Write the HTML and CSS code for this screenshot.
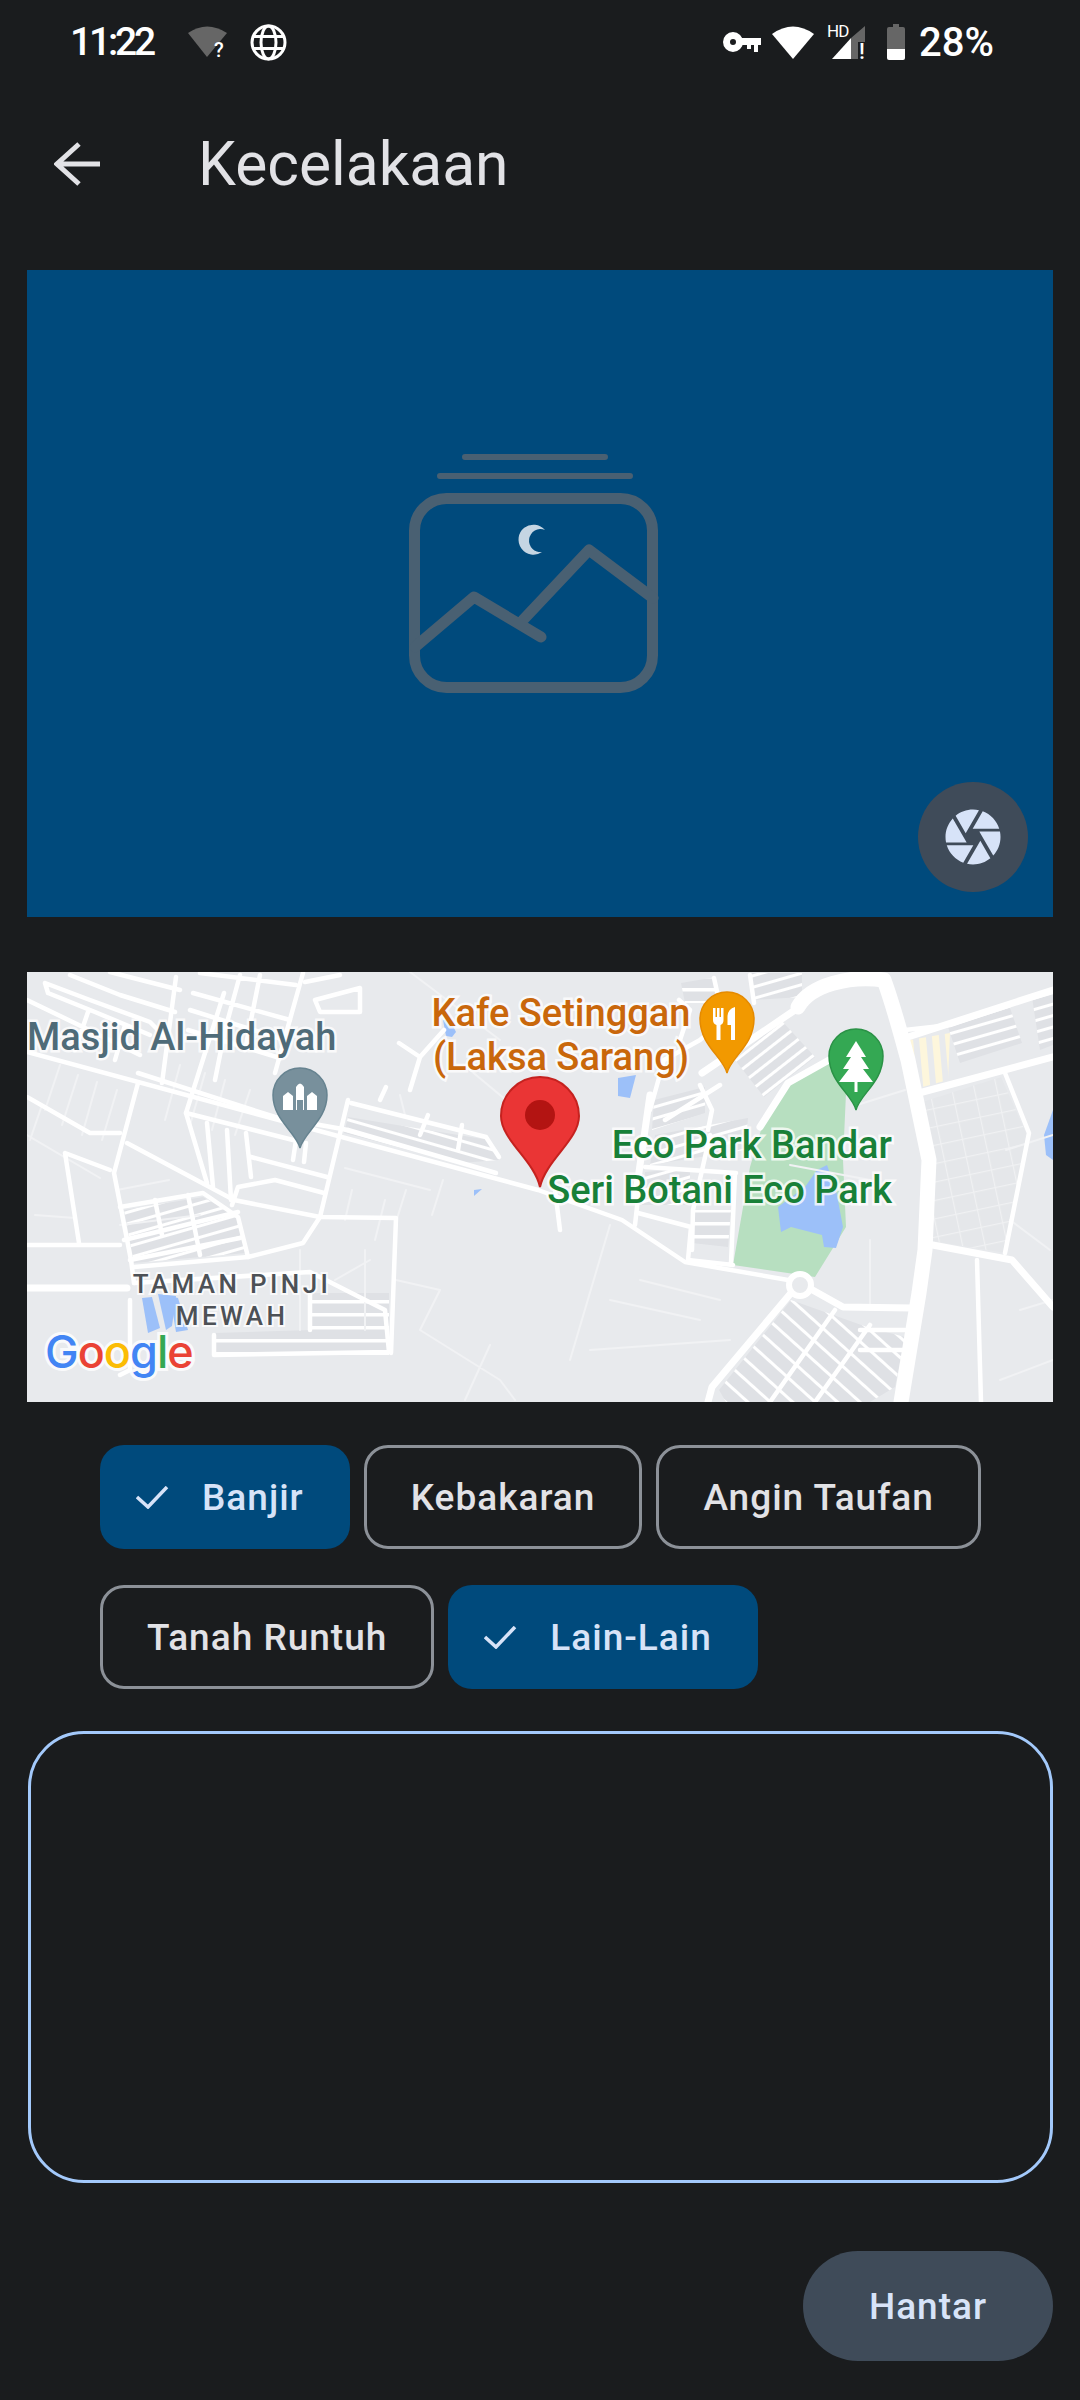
FILE: index.html
```html
<!DOCTYPE html>
<html lang="ms">
<head>
  <meta charset="UTF-8">
  <title>Kecelakaan</title>
  <link rel="stylesheet" href="styles.css">
</head>
<body>

<div class="status-bar">
  <span class="status-text status-time">11:22</span>
  <svg class="icon-wifi-off" viewBox="0 -4 40 40">
    <path class="grey-fill" d="M0 7 Q19 -6 39 7 L19 31 Z"/>
    <text class="tiny-q" x="26" y="31">?</text>
  </svg>
  <svg class="icon-globe" viewBox="0 0 37 37">
    <circle class="line-w" cx="18.5" cy="18.5" r="16.5"/>
    <ellipse class="line-w" cx="18.5" cy="18.5" rx="7.5" ry="16.5"/>
    <path class="line-w" d="M3 12.5 H34 M3 24.5 H34"/>
  </svg>
  <span class="status-spacer"></span>
  <svg class="icon-key" viewBox="0 0 38 21">
    <circle class="key-ring" cx="10" cy="10" r="6.5"/>
    <path class="white-fill" d="M16 6 H38 V13 H35 V20 H31 V13 H28 V17 H24 V13 H16 Z"/>
  </svg>
  <svg class="icon-wifi" viewBox="0 0 42 33">
    <path class="white-fill" d="M0 8 Q21 -7 42 8 L21 33 Z"/>
  </svg>
  <svg class="icon-signal" viewBox="0 -6 40 48">
    <path class="grey-fill" d="M24 14 L38 2 V18 H31 V35 H24 Z"/>
    <path class="white-fill" d="M5 35 L24 14 V35 Z"/>
    <text class="tiny-hd" x="0" y="13">HD</text>
    <text class="tiny-bang" x="32" y="35">!</text>
  </svg>
  <svg class="icon-battery" viewBox="0 0 18 36">
    <path class="grey-fill" d="M6 0 H12 V3 H16 Q18 3 18 5 V25 H0 V5 Q0 3 2 3 H6 Z"/>
    <path class="white-fill" d="M0 25 H18 V34 Q18 36 16 36 H2 Q0 36 0 34 Z"/>
  </svg>
  <span class="status-text status-battery">28%</span>
</div>

<div class="top-bar">
  <svg class="back-arrow" viewBox="0 0 46 44">
    <path d="M25 2 L3 22 L25 42 M3 22 H46"/>
  </svg>
  <h1 class="page-title">Kecelakaan</h1>
</div>

<div class="photo-box">
  <svg class="photo-art" viewBox="27 270 1026 647">
    <path class="art-thin" d="M465 457 H605 M440 476 H630"/>
    <rect class="art-line" x="414.5" y="498.5" width="238" height="189" rx="32"/>
    <path class="art-line" d="M415 647 L474 597 L541 637 M523 620 L589 550 L653 598"/>
    <path class="art-moon" d="M545 530 A15 15 0 1 0 542 552 A11.5 11.5 0 1 1 545 530 Z"/>
  </svg>
  <div class="shutter-btn">
    <svg class="shutter-icon" viewBox="0 0 24 24">
      <path d="M9.4 10.5l4.77-8.26C13.47 2.09 12.75 2 12 2c-2.4 0-4.6.85-6.32 2.25l3.66 6.35.06-.1zM21.54 9c-.92-2.92-3.15-5.26-6-6.34L11.88 9h9.66zm.26 1h-7.49l.29.5 4.76 8.25C21 16.97 22 14.61 22 12c0-.69-.07-1.35-.2-2zM8.54 12l-3.9-6.75C3.01 7.03 2 9.39 2 12c0 .69.07 1.35.2 2h7.49l-1.15-2zm-6.08 3c.92 2.92 3.15 5.26 6 6.34L12.12 15H2.46zm11.27 0l-3.9 6.76c.7.15 1.42.24 2.17.24 2.4 0 4.6-.85 6.32-2.25l-3.66-6.35-.93 1.6z"/>
    </svg>
  </div>
</div>

<div class="map-box">
  <svg class="map-art" viewBox="27 972 1026 430">
    <defs>
      <pattern id="stripA" width="11" height="11" patternUnits="userSpaceOnUse" patternTransform="rotate(-16)">
        <rect width="11" height="11" fill="#dfe1e5"/><rect width="11" height="3" fill="#fff"/>
      </pattern>
      <pattern id="stripB" width="11" height="11" patternUnits="userSpaceOnUse" patternTransform="rotate(16)">
        <rect width="11" height="11" fill="#dfe1e5"/><rect width="11" height="3" fill="#fff"/>
      </pattern>
      <pattern id="stripC" width="11" height="11" patternUnits="userSpaceOnUse" patternTransform="rotate(52)">
        <rect width="11" height="11" fill="#dfe1e5"/><rect width="3" height="11" fill="#fff"/>
      </pattern>
      <pattern id="stripD" width="15" height="15" patternUnits="userSpaceOnUse" patternTransform="rotate(42)">
        <rect width="15" height="15" fill="#dfe1e5"/><rect width="15" height="3" fill="#fff"/>
      </pattern>
      <pattern id="stripE" width="13" height="13" patternUnits="userSpaceOnUse">
        <rect width="13" height="13" fill="#dfe1e5"/><rect width="13" height="3.5" fill="#fff"/>
      </pattern>
      <pattern id="stripF" width="13" height="13" patternUnits="userSpaceOnUse" patternTransform="rotate(-5)">
        <rect width="13" height="13" fill="#fdf6dc"/><rect width="6" height="13" fill="#e8eaed"/>
      </pattern>
      <pattern id="stripG" width="22" height="18" patternUnits="userSpaceOnUse" patternTransform="rotate(-12)">
        <rect width="22" height="18" fill="#e5e7ea"/><rect width="22" height="1.2" fill="#f0f1f3"/><rect width="1.2" height="18" fill="#f0f1f3"/>
      </pattern>
    </defs>

    <rect x="27" y="972" width="1026" height="430" fill="#e8eaed"/>

    <!-- blocks of houses -->
    <polygon fill="url(#stripB)" points="348,1117 489,1140 499,1160 461,1163 344,1133"/>
    <polygon fill="url(#stripA)" points="124,1210 203,1197 238,1217 246,1253 134,1263"/>
    <polygon fill="url(#stripE)" points="310,1293 389,1293 389,1355 214,1355 214,1333 310,1330"/>
    <polygon fill="url(#stripC)" points="781,1020 815,1057 764,1097 735,1060"/>
    <polygon fill="url(#stripA)" points="654,1100 705,1087 705,1113 652,1130"/>
    <polygon fill="url(#stripE)" points="681,983 716,977 716,1003 685,1003"/>
    <polygon fill="url(#stripA)" points="750,973 802,973 802,997 753,1000"/>
    <polygon fill="url(#stripA)" points="948,1027 1010,1008 1022,1043 960,1063"/>
    <polygon fill="url(#stripA)" points="1032,997 1053,990 1053,1045 1040,1050"/>
    <polygon fill="url(#stripF)" points="910,1040 950,1033 948,1080 919,1088"/>
    <polygon fill="url(#stripG)" points="919,1103 1001,1077 1026,1133 1022,1173 1005,1253 926,1240 933,1167"/>
    <polygon fill="url(#stripD)" points="791,1300 867,1327 905,1337 895,1387 870,1402 726,1402 719,1390"/>
    <polygon fill="url(#stripE)" points="693,1210 731,1210 728,1247 692,1243"/>
    <polygon fill="url(#stripA)" points="645,1172 690,1168 690,1205 642,1205"/>
    <polygon fill="url(#stripA)" points="655,1135 748,1118 745,1150 650,1165"/>

    <!-- park and water -->
    <polygon fill="#b7dfc0" points="829,1063 846,1093 843,1160 846,1227 815,1277 733,1265 750,1167 764,1120 788,1083"/>
    <polygon fill="#9cc0f9" points="778,1207 805,1187 817,1170 827,1165 836,1190 843,1227 836,1248 824,1247 822,1235 791,1227 781,1232"/>
    <polygon fill="#9cc0f9" points="618,1078 636,1075 630,1098 618,1096"/>
    <polygon fill="#9cc0f9" points="443,1020 450,1020 456,1032 452,1037 446,1036"/>
    <polygon fill="#9cc0f9" points="170,1296 178,1298 188,1330 176,1332"/>
    <polygon fill="#9cc0f9" points="142,1298 152,1297 160,1328 148,1333"/>
    <polygon fill="#9cc0f9" points="158,1294 176,1296 172,1326 166,1330"/>
    <polygon fill="#9cc0f9" points="1053,1110 1053,1160 1046,1155 1044,1135"/>
    <polygon fill="#9cc0f9" points="474,1190 482,1189 474,1196"/>

    <!-- thin lanes -->
    <path class="road-faint" d="M42 1105 L30 1140 M60 1065 L45 1110 M78 1075 L62 1125 M97 1082 L82 1135 M117 1090 L102 1140 M27 1135 L100 1178 M35 1215 L75 1218 M180 1065 L165 1120 M205 1073 L190 1125 M225 1080 L212 1130 M250 1090 L235 1135 M400 1095 L405 1115 M443 1180 L432 1215 M385 1200 L375 1240 M352 1190 L345 1220 M406 1190 L395 1225 M396 1280 L440 1290 L420 1330 L500 1380 L515 1400 M490 1345 L465 1400 M335 1280 L370 1260 M1006 1150 L1053 1135 M1010 1220 L1050 1250 M790 1165 L870 1180 M610 1225 L570 1360 M640 1280 L720 1300 M590 1350 L730 1340 M610 1300 L700 1320 M470 1070 L530 1120 M1020 1310 L1053 1300 M1000 1380 L1053 1360 M410 972 L500 1040 M300 1250 L300 1330 M365 1250 L365 1330 M857 1105 L905 1090 M870 1240 L870 1310 M117 1190 L169 1180 M120 1225 L200 1215 M345 1168 L430 1190"/>

    <!-- streets -->
    <path class="road" d="M27 1052 L538 1190 L622 1220 L685 1262 L788 1280"/>
    <path class="road" d="M45 983 L90 1000 L150 1022 L168 1040 M48 993 L95 1012 L150 1035 M27 1000 L85 1028 L140 1055 M70 975 L120 995 L175 1012 M110 972 L180 990 M88 1012 L75 1050 M125 1025 L115 1060 M45 983 L48 993"/>
    <path class="road" d="M193 993 L290 1020 M190 1010 L285 1040 M188 1030 L280 1058 M240 975 L225 1030 L215 1080 M260 975 L245 1050 M296 985 L200 973 M340 975 L305 982 M315 1000 L360 988 L360 1012 L320 1012 L315 1000"/>
    <path class="road" d="M138 1073 L275 1117 L348 1130 M186 1113 L293 1140 M296 1140 L293 1160 M306 1143 L304 1162"/>
    <path class="road" d="M27 1097 L90 1133 L120 1133 M127 1143 L234 1200 L320 1217 L396 1218 L391 1353 M138 1083 L114 1173 L131 1260 L134 1283 M27 1245 L120 1245 M65 1153 L79 1243 M65 1153 L110 1170"/>
    <path class="road" d="M348 1100 L320 1217 L303 1243 L248 1257 L134 1267 M176 977 L162 1083 M303 973 L275 1073 M224 993 L186 1113 L207 1183 M207 1123 L213 1187 M227 1130 L231 1200 M246 1133 L251 1177 M251 1157 L327 1177 M238 1187 L275 1180 L324 1193 M238 1187 L232 1205"/>
    <path class="road" d="M351 1103 L486 1137 L499 1157 M348 1130 L496 1173 M380 1100 L386 1087 M428 1115 L420 1135 M462 1125 L458 1150"/>
    <path class="road" d="M399 1043 L420 1057 L410 1090 M420 1057 L444 1030 M120 1207 L203 1193 L238 1217 L248 1257 M155 1200 L162 1235 M188 1195 L200 1255 M124 1240 L238 1212 M130 1260 L240 1238"/>
    <path class="road" d="M134 1283 L310 1272 L385 1310 L389 1352 L214 1355 L214 1335 M310 1293 L310 1330 M130 1300 L130 1370 L120 1375"/>
    <path class="road" d="M679 1000 L690 1010 L680 1040 M650 1110 L664 1060 L700 1040 M735 1010 L700 1040 M714 978 L720 1005 M750 975 L754 1003 M710 1135 L693 1210 L692 1250 M555 1190 L560 1230 M640 1180 L635 1225 M905 1030 L950 1025 L1010 1005 M645 1167 L736 1173 M638 1213 L691 1227 L688 1260 L733 1265 M735 1173 L731 1263 M700 1085 L712 1110 L708 1130"/>
    <path class="road" d="M1005 1253 L1029 1133 L1005 1073 M977 1260 L981 1402 M720 1085 L665 1120 M835 1310 L770 1402 M870 1325 L815 1402 M860 1330 L905 1330 M860 1350 L905 1350"/>
    <path class="road-mid" d="M650 1095 L635 1200 M922 1243 L1012 1260 L1053 1307 M919 1093 L1053 1057 M908 1037 L1053 990 M791 1293 L712 1387 L708 1402 M809 1288 L843 1307 L912 1308 M760 1127 L788 1083 L829 1060 M702 1073 L795 1010 M27 1288 L127 1288"/>
    <path class="road-wide" d="M798 1007 C810 985 850 975 884 980 C895 1010 905 1050 908 1060 L929 1160 L925 1250 L919 1293 L901 1402"/>
    <circle class="roundabout" cx="800" cy="1285" r="11"/>

    <!-- labels -->
    <text class="map-label label-poi" x="27" y="1050">Masjid Al-Hidayah</text>
    <text class="map-label label-food" x="561" y="1026">Kafe Setinggan</text>
    <text class="map-label label-food" x="561" y="1070">(Laksa Sarang)</text>
    <text class="map-label label-park" x="892" y="1158">Eco Park Bandar</text>
    <text class="map-label label-park" x="892" y="1203">Seri Botani Eco Park</text>
    <text class="map-area" x="232" y="1293">TAMAN PINJI</text>
    <text class="map-area" x="232" y="1325">MEWAH</text>

    <!-- pins -->
    <path fill="#78909c" stroke="#668390" stroke-width="1.5" d="M300 1148 C296 1132 273 1120 273 1095 A27 27 0 0 1 327 1095 C327 1120 304 1132 300 1148 Z"/>
    <path fill="#fff" d="M283 1110 V1096 L288 1092 L293 1096 V1110 Z M307 1110 V1096 L312 1092 L317 1096 V1110 Z M296 1110 V1087 Q300 1080 304 1087 V1110 H303 V1100 H297 V1110 Z"/>
    <path fill="#f29900" stroke="#e58a00" stroke-width="1.5" d="M727 1073 C723 1057 700 1045 700 1019 A27 27 0 0 1 754 1019 C754 1045 731 1057 727 1073 Z"/>
    <path fill="#fff" d="M713 1008 H715.5 V1017 H717 V1008 H719.5 V1017 H721 V1008 H723.5 V1020 Q723.5 1024 720.5 1025 V1040 H716.5 V1025 Q713 1024 713 1020 Z M731 1040 V1025 H727.5 V1016 Q728 1009 735 1007 V1040 Z"/>
    <path fill="#34a853" stroke="#2a9246" stroke-width="1.5" d="M856 1110 C852 1094 829 1082 829 1056 A27 27 0 0 1 883 1056 C883 1082 860 1094 856 1110 Z"/>
    <path fill="#fff" d="M856 1041 L866 1057 H861 L869 1069 H863 L873 1082 H857.5 V1092 H854.5 V1082 H839 L849 1069 H843 L851 1057 H846 Z"/>
    <path fill="#ea3535" stroke="#c5221f" stroke-width="2" d="M540 1187 C534 1160 501 1140 501 1116 A39 39 0 0 1 579 1116 C579 1140 546 1160 540 1187 Z"/>
    <circle cx="540" cy="1115" r="15" fill="#b31412"/>

    <text class="google-logo" x="45" y="1368"><tspan fill="#4285f4">G</tspan><tspan fill="#ea4335">o</tspan><tspan fill="#fbbc04">o</tspan><tspan fill="#4285f4">g</tspan><tspan fill="#34a853">l</tspan><tspan fill="#ea4335">e</tspan></text>
  </svg>
</div>

<div class="chips">
  <div class="chip chip-on">
    <svg class="chip-check" viewBox="0 0 33 23"><path d="M1 11 L12 21 L31 1"/></svg>
    Banjir
  </div>
  <div class="chip">Kebakaran</div>
  <div class="chip">Angin Taufan</div>
  <div class="chip">Tanah Runtuh</div>
  <div class="chip chip-on">
    <svg class="chip-check" viewBox="0 0 33 23"><path d="M1 11 L12 21 L31 1"/></svg>
    Lain-Lain
  </div>
</div>

<div class="note-box"></div>

<div class="actions">
  <button class="send-btn">Hantar</button>
</div>

</body>
</html>
```

FILE: styles.css
```css
body {
  margin: 0;
  width: 1080px;
  height: 2400px;
  overflow: hidden;
  background: #1a1c1e;
  color: #e2e2e6;
  font-family: Roboto, sans-serif;
}

/* status bar */
.status-bar {
  display: flex;
  align-items: center;
  height: 84px;
  padding: 0 86px 0 70px;
  box-sizing: border-box;
}

.status-text {
  font-size: 40px;
  font-weight: 500;
  color: #fff;
}

.status-time {
  width: 118px;
  font-size: 39px;
  letter-spacing: -3.2px;
}

.status-spacer {
  flex: 1;
}

.status-battery {
  margin-left: 14px;
}

.icon-wifi-off {
  width: 40px;
  height: 40px;
}

.icon-globe {
  width: 37px;
  height: 37px;
  margin-left: 22px;
}

.icon-key {
  width: 38px;
  height: 21px;
}

.icon-wifi {
  width: 42px;
  height: 33px;
  margin-left: 11px;
}

.icon-signal {
  width: 40px;
  height: 48px;
  margin-left: 13px;
}

.icon-battery {
  width: 18px;
  height: 36px;
  margin-left: 20px;
}

.grey-fill {
  fill: #666;
}

.white-fill {
  fill: #fff;
}

.line-w {
  fill: none;
  stroke: #fff;
  stroke-width: 3;
}

.key-ring {
  fill: none;
  stroke: #fff;
  stroke-width: 7;
}

.tiny-q {
  font-size: 20px;
  font-weight: 500;
  fill: #fff;
}

.tiny-bang {
  font-size: 22px;
  font-weight: 500;
  fill: #fff;
}

.tiny-hd {
  font-size: 17px;
  letter-spacing: -1px;
  fill: #fff;
}

/* top bar */
.top-bar {
  display: flex;
  align-items: center;
  height: 160px;
  padding-left: 54px;
}

.back-arrow {
  width: 46px;
  height: 44px;
  fill: none;
  stroke: #e2e2e6;
  stroke-width: 5;
}

.page-title {
  margin: 0 0 0 98px;
  font-size: 60.5px;
  font-weight: 400;
  color: #e2e2e6;
}

/* photo */
.photo-box {
  position: relative;
  height: 647px;
  margin: 26px 27px 0;
  background: #004a7c;
}

.photo-art {
  display: block;
  width: 100%;
  height: 100%;
}

.art-line {
  fill: none;
  stroke: #496072;
  stroke-width: 11;
  stroke-linecap: round;
  stroke-linejoin: round;
}

.art-thin {
  fill: none;
  stroke: #496072;
  stroke-width: 6;
  stroke-linecap: round;
}

.art-moon {
  fill: #c5d5e3;
}

.shutter-btn {
  position: absolute;
  right: 25px;
  bottom: 25px;
  display: flex;
  align-items: center;
  justify-content: center;
  width: 110px;
  height: 110px;
  border-radius: 50%;
  background: #3f4b59;
}

.shutter-icon {
  width: 66px;
  height: 66px;
  fill: #d7e3f8;
}

/* map */
.map-box {
  height: 430px;
  margin: 55px 27px 0;
  overflow: hidden;
}

.map-art {
  display: block;
  width: 100%;
  height: 100%;
}

.road,
.road-mid,
.road-wide,
.road-faint {
  fill: none;
  stroke: #fff;
  stroke-linejoin: round;
  stroke-linecap: round;
}

.road {
  stroke-width: 4.5;
}

.road-mid {
  stroke-width: 7;
}

.road-wide {
  stroke-width: 15;
}

.road-faint {
  stroke: #f1f2f4;
  stroke-width: 2;
}

.roundabout {
  fill: #e8eaed;
  stroke: #fff;
  stroke-width: 6;
}

.map-label {
  font-size: 38px;
  font-weight: 500;
  stroke: #fff;
  stroke-opacity: 0.75;
  stroke-width: 5px;
  paint-order: stroke;
}

.label-poi {
  fill: #4f6b78;
}

.label-food {
  fill: #c9670b;
  text-anchor: middle;
}

.label-park {
  fill: #188038;
  text-anchor: end;
}

.map-area {
  font-size: 26px;
  font-weight: 500;
  letter-spacing: 3.4px;
  text-anchor: middle;
  fill: #4d5156;
  stroke: #fff;
  stroke-opacity: 0.75;
  stroke-width: 4px;
  paint-order: stroke;
}

.google-logo {
  font-family: Inter, sans-serif;
  font-size: 45px;
  font-weight: 500;
  letter-spacing: -1px;
  stroke: #fff;
  stroke-opacity: 0.8;
  stroke-width: 6px;
  paint-order: stroke;
}

/* chips */
.chips {
  display: flex;
  flex-wrap: wrap;
  gap: 36px 14px;
  margin-top: 43px;
  padding: 0 28px 0 100px;
}

.chip {
  display: flex;
  align-items: center;
  box-sizing: border-box;
  height: 104px;
  padding: 0 44px;
  border: 3px solid #8c9198;
  border-radius: 24px;
  font-size: 37px;
  font-weight: 500;
  letter-spacing: 1px;
  color: #e2e2e6;
}

.chip-on {
  padding: 0 46px 0 36px;
  border: 0;
  background: #004a7c;
  color: #d7e3f8;
}

.chip-check {
  width: 33px;
  height: 23px;
  margin-right: 33px;
  fill: none;
  stroke: #d7e3f8;
  stroke-width: 3.5;
}

/* text box */
.note-box {
  box-sizing: border-box;
  height: 452px;
  margin: 42px 27px 0 28px;
  border: 3px solid #a3c9fb;
  border-radius: 56px;
}

/* button */
.actions {
  display: flex;
  justify-content: flex-end;
  margin: 68px 27px 0 0;
}

.send-btn {
  width: 250px;
  height: 110px;
  padding: 0;
  border: 0;
  border-radius: 55px;
  background: #3f4b59;
  color: #d7e3f8;
  font-family: Roboto, sans-serif;
  font-size: 37px;
  font-weight: 500;
  letter-spacing: 1px;
}
```
